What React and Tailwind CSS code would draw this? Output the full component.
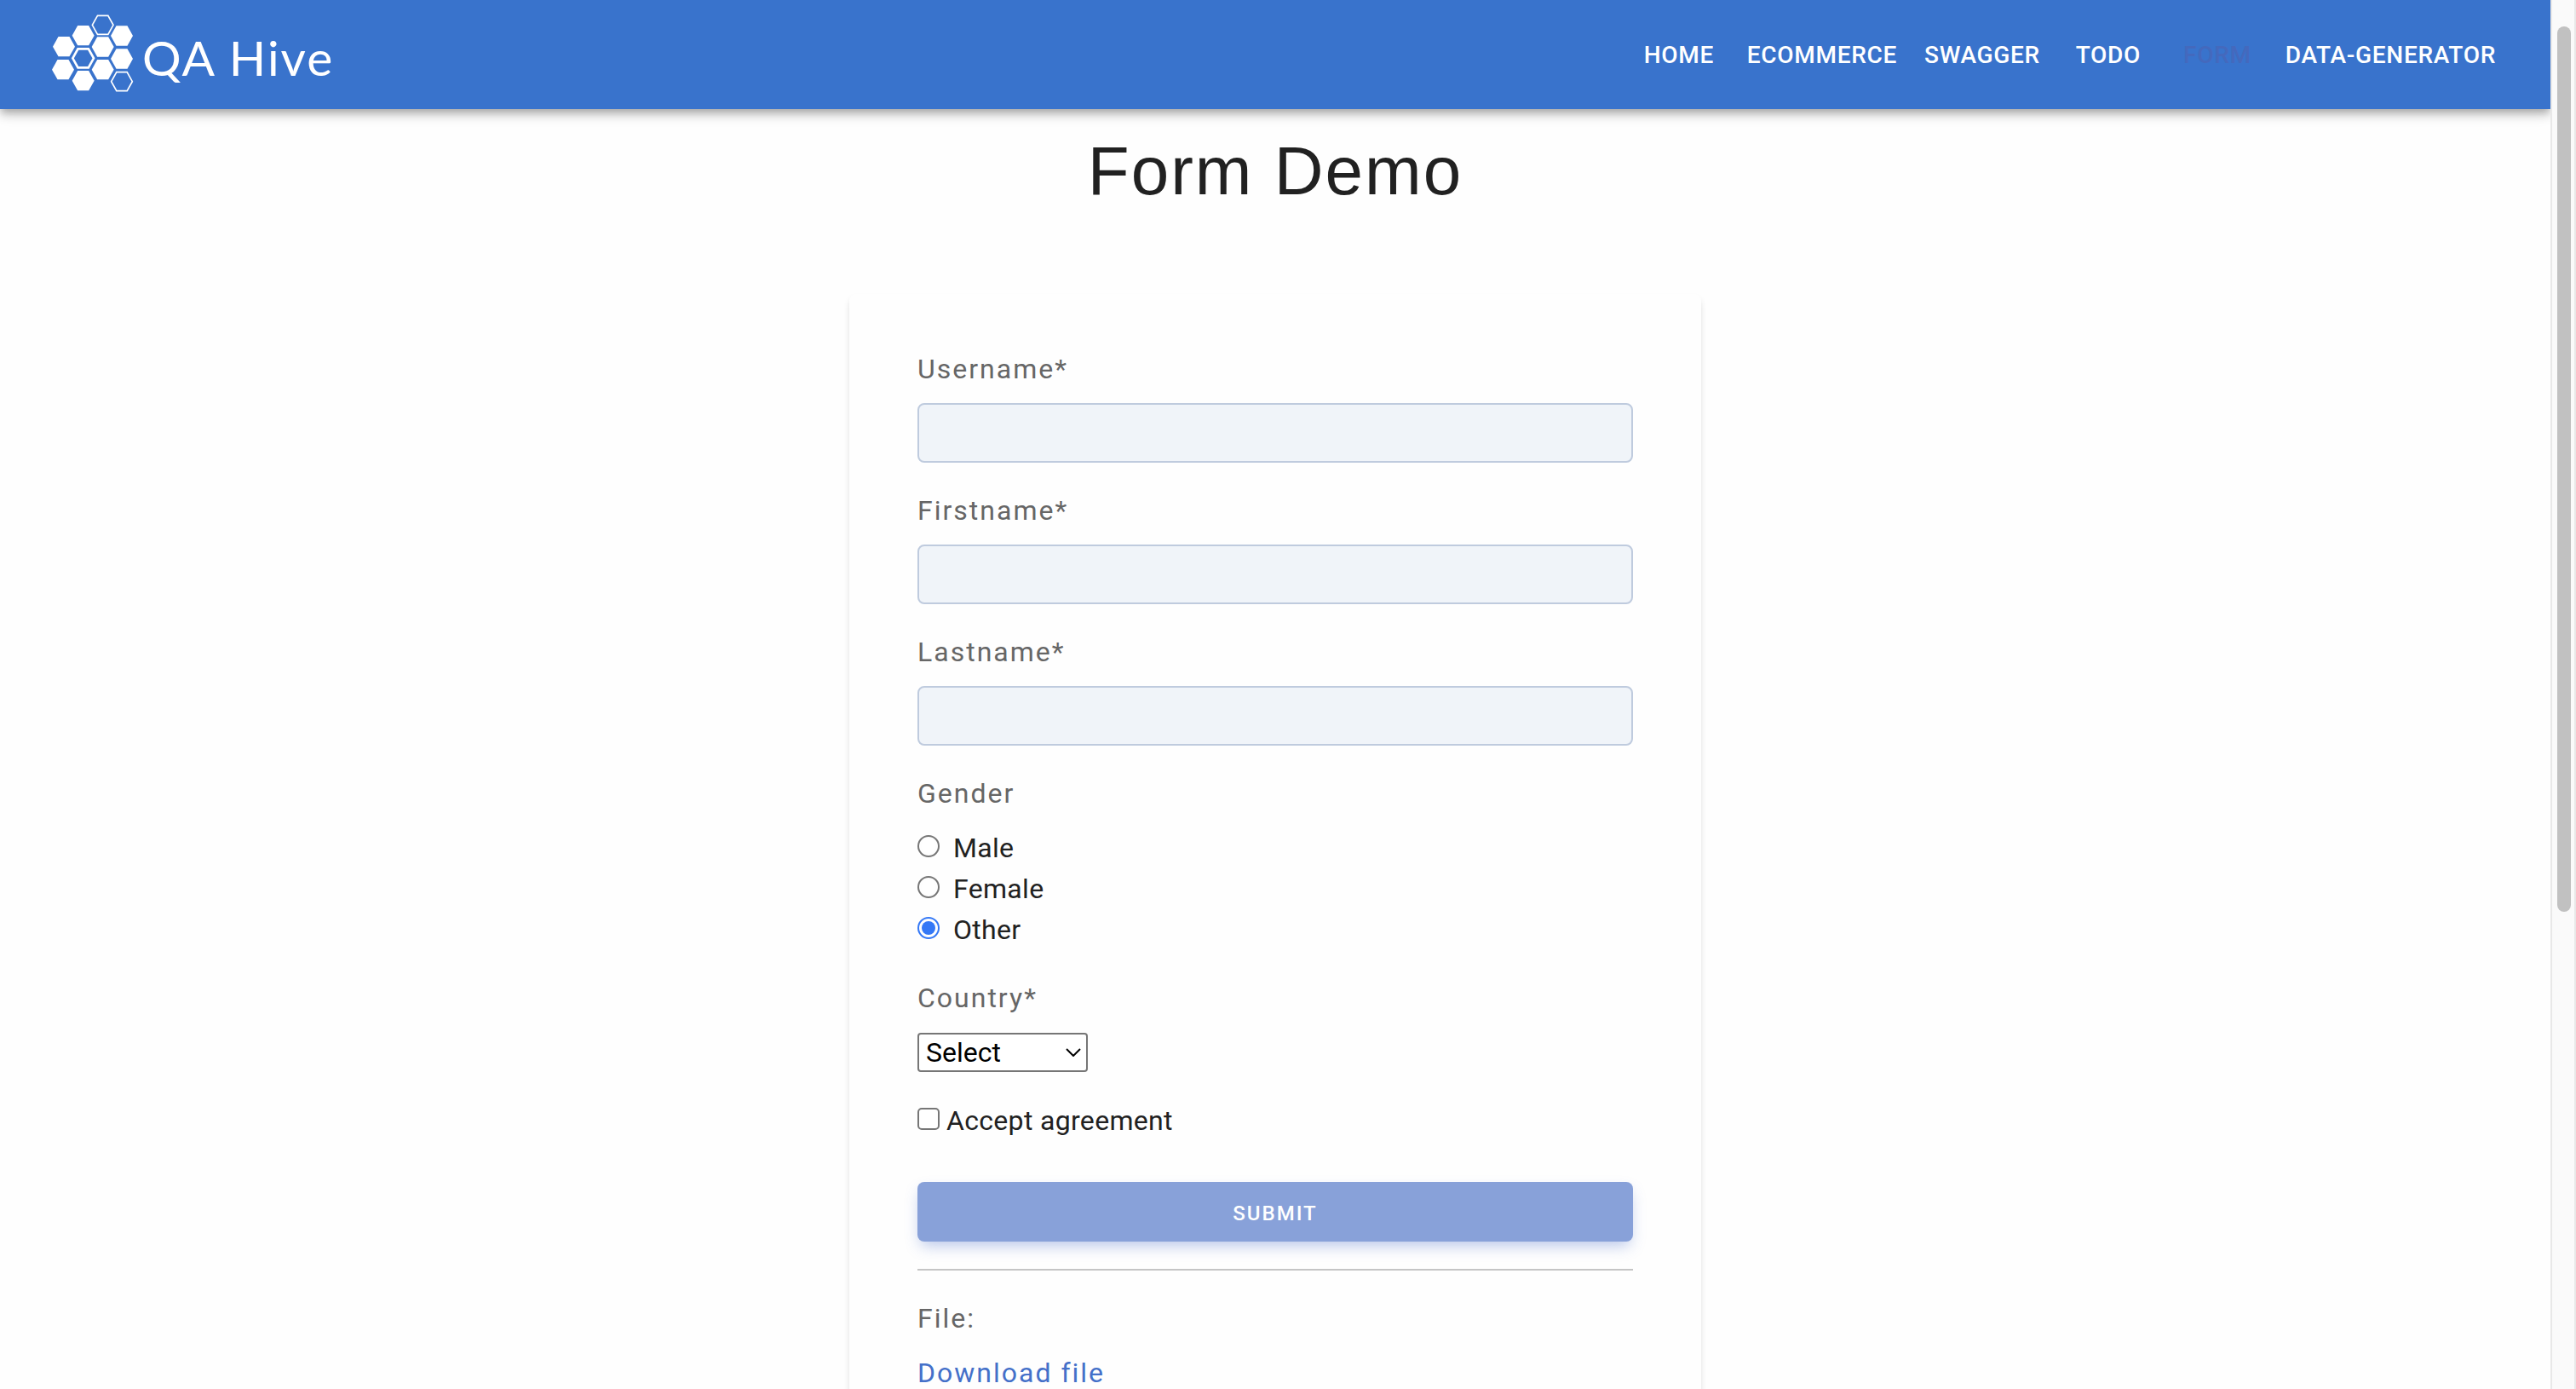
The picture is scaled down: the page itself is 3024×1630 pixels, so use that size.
const NAV = ['HOME', 'ECOMMERCE', 'SWAGGER', 'TODO', 'FORM', 'DATA-GENERATOR'];

const SOLID = [[173, 124], [309, 125], [105, 163], [242, 164], [309, 206], [102, 244], [242, 244], [173, 283]];
const HOLLOW = [[242, 87, 5], [173, 204, 8], [309, 286, 5]];

function hexPoints(x, y, w, h) {
  return [[-w, 0], [-w / 2, -h], [w / 2, -h], [w, 0], [w / 2, h], [-w / 2, h]]
    .map(([dx, dy]) => `${x + dx},${y + dy}`)
    .join(' ');
}

function Logo() {
  return (
    <a href="#home" className="flex items-center gap-[9px] font-[Lato,sans-serif] text-[57px] leading-[96px] tracking-[2px] text-white">
      <svg viewBox="60 44 294 288" className="mb-0.5 h-24 w-[98px]" aria-hidden="true">
        {SOLID.map(([x, y]) => (
          <polygon key={`${x}-${y}`} points={hexPoints(x, y, 39, 35)} fill="#fff" />
        ))}
        {HOLLOW.map(([x, y, s]) => (
          <polygon key={`${x}-${y}`} points={hexPoints(x, y, 37, 33)} fill="none" stroke="#fff" strokeWidth={s} />
        ))}
      </svg>
      <span className="pt-1.5">QA Hive</span>
    </a>
  );
}

function TextField({ id, label }) {
  return (
    <div className="flex flex-col gap-4">
      <label htmlFor={id} className="text-[#666] tracking-[2px]">{label}</label>
      <input id={id} type="text" className="h-[70px] w-full rounded-lg border-2 border-[#bfcbde] bg-[#f0f4f9] px-4" />
    </div>
  );
}

function Radio({ label, checked }) {
  return (
    <label className="flex h-12 items-start gap-4 tracking-[0.01em]">
      <input
        type="radio"
        name="gender"
        defaultChecked={checked}
        className="mt-[9px] size-[26px] shrink-0 appearance-none rounded-full border-2 border-[#767676] bg-white bg-clip-content p-[3px] checked:border-[#3478f6] checked:bg-[#3478f6]"
      />
      {label}
    </label>
  );
}

export default function App() {
  return (
    <div className="flex h-screen overflow-hidden bg-[#fefefe] font-[Roboto,sans-serif] text-[32px] leading-[48px] text-[#212121]">
      <div className="flex min-w-0 flex-1 flex-col overflow-hidden">
        <header className="relative flex h-32 shrink-0 items-center justify-between bg-[#3973cc] pr-12 pl-15 shadow-[0_4px_8px_-2px_rgba(0,0,0,0.2),0_8px_10px_rgba(0,0,0,0.14),0_2px_20px_rgba(0,0,0,0.12)]">
          <Logo />
          <nav className="flex pt-0.5 text-[28px] font-medium tracking-wide">
            {NAV.map((n) => (
              <a
                key={n}
                href={`#${n.toLowerCase()}`}
                className={`min-w-32 px-4 text-center ${n === 'FORM' ? 'text-[#4469bd]' : 'text-white'}`}
              >
                {n}
              </a>
            ))}
          </nav>
        </header>
        <main className="flex flex-col items-center pt-6">
          <h1 className="font-['Liberation_Sans',sans-serif] text-[80px] leading-[98px] tracking-[2px]">Form Demo</h1>
          <form className="mt-[95px] flex w-full max-w-[1000px] flex-col gap-8 rounded-lg bg-[#fefefe] px-20 py-16 shadow-[0_5px_8px_-2px_rgba(0,0,0,0.2)]">
            <TextField id="username" label="Username*" />
            <TextField id="firstname" label="Firstname*" />
            <TextField id="lastname" label="Lastname*" />
            <fieldset>
              <legend className="mb-4 text-[#666] tracking-[2px]">Gender</legend>
              <Radio label="Male" />
              <Radio label="Female" />
              <Radio label="Other" checked />
            </fieldset>
            <div className="flex flex-col items-start gap-4">
              <label htmlFor="country" className="text-[#666] tracking-[2px]">Country*</label>
              <div className="relative flex h-12 items-center">
                <select id="country" className="h-[46px] w-[200px] appearance-none rounded-[4px] border-2 border-[#767676] bg-white pl-2 leading-[42px] text-black">
                  <option>Select</option>
                </select>
                <svg viewBox="0 0 18 10" className="pointer-events-none absolute right-2 h-[10px] w-[18px]" fill="none" stroke="#000" strokeWidth="2" aria-hidden="true">
                  <path d="M1 1l8 8 8-8" />
                </svg>
              </div>
            </div>
            <label className="flex items-start gap-2 tracking-[0.01em]">
              <input type="checkbox" className="mt-[9px] size-[26px] shrink-0 appearance-none rounded-[5px] border-2 border-[#767676] bg-white" />
              Accept agreement
            </label>
            <button type="button" className="mt-4 h-[70px] w-full rounded-lg bg-[#88a1d9] pt-1 text-[24px] font-medium tracking-[2px] text-white shadow-[0_8px_18px_-4px_rgba(68,105,200,0.4)]">
              SUBMIT
            </button>
            <hr className="border-t-2 border-[#c5c5c5]" />
            <div className="flex flex-col items-start gap-4 tracking-[2px]">
              <span className="text-[#666]">File:</span>
              <a href="#download" className="text-[#4470c9]">Download file</a>
            </div>
          </form>
        </main>
      </div>
      <div className="w-[30px] shrink-0 border-x-2 border-[#e8e8e8] bg-[#fafafa] px-[6px] pt-[31px] pr-1" aria-hidden="true">
        <div className="h-[65%] w-4 rounded-full bg-[#c1c1c1]" />
      </div>
    </div>
  );
}
